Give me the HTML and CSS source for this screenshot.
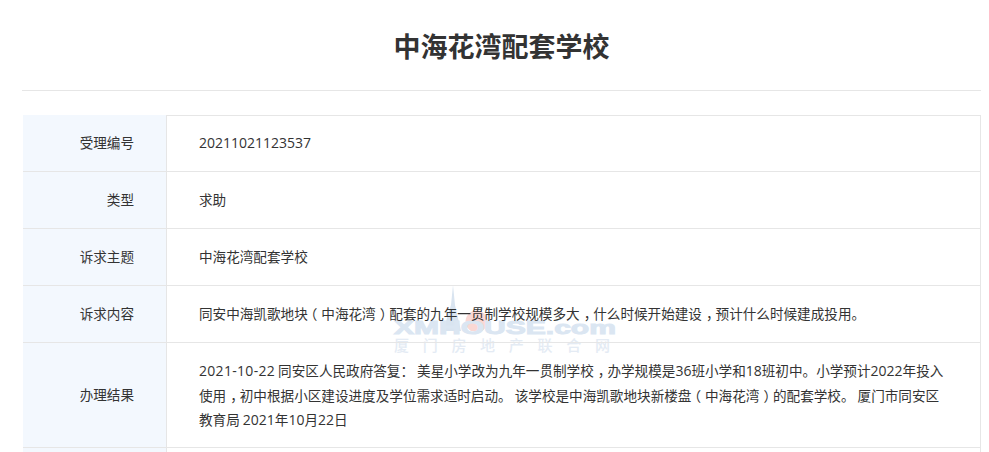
FILE: index.html
```html
<!DOCTYPE html>
<html lang="zh-CN">
<head>
<meta charset="utf-8">
<title>中海花湾配套学校</title>
<link rel="stylesheet" href="styles.css">
</head>
<body>
<div class="watermark" aria-hidden="true">
  <svg class="wm-mark" width="100" height="50" viewBox="0 0 100 50">
    <path d="M13 0 L15 20 L21 46 L3 46 L11 20 Z" fill="#d9e4f0"/>
    <path d="M31 46 A11 11 0 1 1 42 46 Z" fill="#fad8d4"/>
  </svg>
  <div class="wm-en">XMHOUSE.com</div>
  <div class="wm-cn">厦门房地产联合网</div>
</div>
<main class="page">
  <h1 class="title">中海花湾配套学校</h1>
  <dl class="info">
    <div class="row row-first"><dt>受理编号</dt><dd><span class="num">20211021123537</span></dd></div>
    <div class="row"><dt>类型</dt><dd>求助</dd></div>
    <div class="row"><dt>诉求主题</dt><dd>中海花湾配套学校</dd></div>
    <div class="row"><dt>诉求内容</dt><dd>同安中海凯歌地块<span class="open">（</span>中海花湾<span class="close">）</span>配套的九年一贯制学校规模多大<span class="close">，</span>什么时候开始建设<span class="close">，</span>预计什么时候建成投用。</dd></div>
    <div class="row"><dt>办理结果</dt><dd class="long"><span class="num date">2021-10-22</span> 同安区人民政府答复： 美星小学改为九年一贯制学校<span class="close">，</span>办学规模是<span class="num">36</span>班小学和<span class="num">18</span>班初中。小学预计<span class="num">2022</span>年投入使用<span class="close">，</span>初中根据小区建设进度及学位需求适时启动。 该学校是中海凯歌地块新楼盘<span class="open">（</span>中海花湾<span class="close">）</span>的配套学校。 厦门市同安区教育局 <span class="num">2021</span>年<span class="num">10</span>月<span class="num">22</span>日</dd></div>
    <div class="row"><dt></dt><dd></dd></div>
  </dl>
</main>
</body>
</html>
```
FILE: styles.css
```css
html, body {
  margin: 0;
  height: 452px;
  overflow: hidden;
  background: #fff;
}
body {
  font-family: "Noto Sans CJK SC", sans-serif;
  color: #333;
  position: relative;
}
.page {
  position: relative;
  width: 959px;
  margin-left: 22px;
}
.title {
  margin: 0;
  height: 90px;
  line-height: 92px;
  font-size: 27px;
  font-weight: 700;
  text-align: center;
  border-bottom: 1px solid #e6e6e6;
}
.info {
  margin: 24px 1px 0;
  font-size: 13.6px;
  border-right: 1px solid #e6e6e6;
  width: 957px;
}
.row {
  display: flex;
  border-bottom: 1px solid #e6e6e6;
}
.row-first {
  box-shadow: inset 0 1px 0 #e6e6e6;
}
.row dt {
  flex: 0 0 144px;
  box-sizing: border-box;
  padding: 0 32px 2px 0;
  background: #f3f8fe;
  border-right: 1px solid #e6e6e6;
  display: flex;
  align-items: center;
  justify-content: flex-end;
}
.row dd {
  flex: 1;
  margin: 0;
  padding: 15px 32px 17px;
  line-height: 24px;
  min-height: 24px;
}
.row dd.long {
  padding: 15px 32px 15.5px;
  line-height: 24.5px;
}
.num {
  font-family: "Open Sans", "Noto Sans CJK SC", sans-serif;
  font-size: 14px;
  line-height: 1;
}
.date {
  letter-spacing: .3px;
}
.open,
.close {
  display: inline-block;
  line-height: 1;
}
.open {
  transform: translateX(-4px);
}
.close {
  transform: translateX(4px);
}
.watermark {
  position: absolute;
  left: 394px;
  top: 285px;
  width: 220px;
  height: 70px;
}
.wm-mark {
  position: absolute;
  left: 46px;
  top: 0;
}
.wm-en {
  position: absolute;
  left: 0;
  top: 33px;
  font: 700 19px/19px "Liberation Sans", sans-serif;
  -webkit-text-stroke: 1px #dbe6f2;
  color: #dbe6f2;
  white-space: nowrap;
  transform: scaleX(1.58);
  transform-origin: left center;
}
.wm-cn {
  position: absolute;
  left: 0;
  top: 50px;
  font: 500 15px/20px "Noto Sans CJK SC", sans-serif;
  letter-spacing: 13.7px;
  color: #e4ebf4;
  white-space: nowrap;
}
```
